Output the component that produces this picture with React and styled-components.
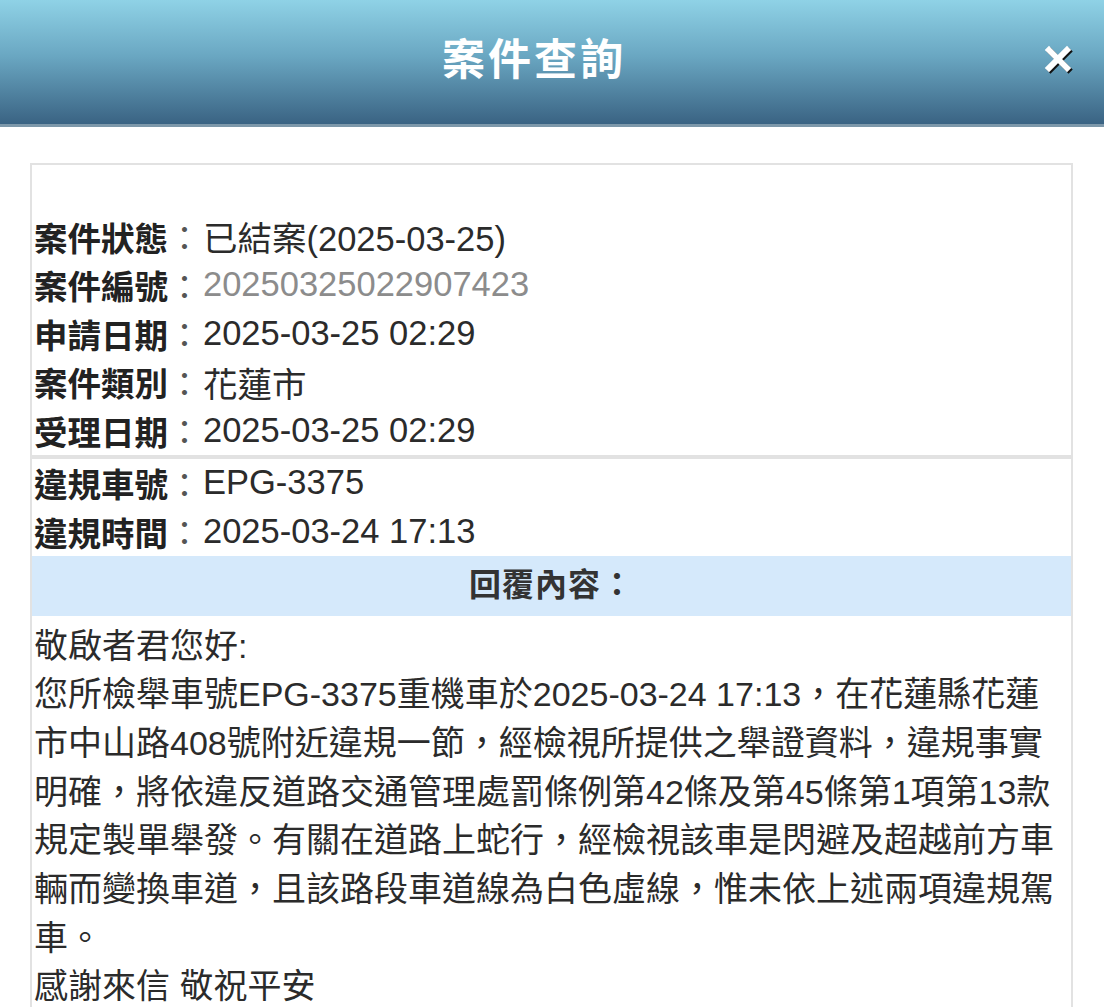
import React from 'react'
import styled, { createGlobalStyle } from 'styled-components'

const GlobalStyle = createGlobalStyle`
  body {
    margin: 0;
    background: #fff;
    font-family: 'Liberation Sans', 'Noto Sans CJK TC', sans-serif;
    color: #333;
  }
`

const info = [
  { label: '案件狀態', value: '已結案(2025-03-25)' },
  { label: '案件編號', value: '20250325022907423', muted: true },
  { label: '申請日期', value: '2025-03-25 02:29' },
  { label: '案件類別', value: '花蓮市' },
  { label: '受理日期', value: '2025-03-25 02:29' },
]

const violation = [
  { label: '違規車號', value: 'EPG-3375' },
  { label: '違規時間', value: '2025-03-24 17:13' },
]

const replyLines = [
  '您所檢舉車號EPG-3375重機車於2025-03-24 17:13，在花蓮縣花蓮',
  '市中山路408號附近違規一節，經檢視所提供之舉證資料，違規事實',
  '明確，將依違反道路交通管理處罰條例第42條及第45條第1項第13款',
  '規定製單舉發。有關在道路上蛇行，經檢視該車是閃避及超越前方車',
  '輛而變換車道，且該路段車道線為白色虛線，惟未依上述兩項違規駕',
  '車。',
]

const App = () => {
  return (
    <>
      <GlobalStyle />
      <Header>
        <Title>案件查詢</Title>
        <Close aria-label='close'>
          <svg width='30' height='30' viewBox='0 0 30 30'>
            <path d='M6 6 L24 24 M24 6 L6 24' stroke='#111' strokeWidth='6' strokeLinecap='square' transform='translate(1.5 1.5)' />
            <path d='M6 6 L24 24 M24 6 L6 24' stroke='#fff' strokeWidth='6' strokeLinecap='square' />
          </svg>
        </Close>
      </Header>
      <Main>
        <Card>
          <Section>
            <Spacer />
            {info.map((row) => (
              <Row key={row.label}>
                <Label>{row.label}</Label>
                <Colon>：</Colon>
                <Value $muted={row.muted}>{row.value}</Value>
              </Row>
            ))}
          </Section>
          <Section>
            {violation.map((row) => (
              <Row key={row.label}>
                <Label>{row.label}</Label>
                <Colon>：</Colon>
                <Value>{row.value}</Value>
              </Row>
            ))}
            <Band>回覆內容：</Band>
            <Reply>
              <p>敬啟者君您好:</p>
              <p>
                {replyLines.map((line, i) => (
                  <React.Fragment key={i}>
                    {line}
                    {i < replyLines.length - 1 && <br />}
                  </React.Fragment>
                ))}
              </p>
              <p>感謝來信 敬祝平安</p>
            </Reply>
          </Section>
        </Card>
      </Main>
    </>
  )
}

const Header = styled.header`
  position: relative;
  height: 127px;
  display: flex;
  align-items: center;
  justify-content: center;
  padding-right: 36px;
  box-sizing: border-box;
  background: linear-gradient(to bottom, #8fd2e6 0%, #6aa7c2 45%, #3a6383 100%);
  border-bottom: 3px solid #7d98aa;
`

const Title = styled.h1`
  margin: -13px 0 0;
  color: #fff;
  font-size: 43px;
  font-weight: 700;
  letter-spacing: 3px;
  font-family: 'Noto Sans CJK TC', sans-serif;
`

const Close = styled.button`
  position: absolute;
  right: 31px;
  top: 44px;
  padding: 0;
  border: 0;
  background: none;
  display: flex;
`

const Main = styled.main`
  padding: 36px 31px 0 30px;
`

const Card = styled.div`
  border: 2px solid #e2e2e2;
  border-bottom: 0;
`

const Section = styled.div`
  & + & {
    border-top: 4px solid #e2e2e2;
  }
`

const Spacer = styled.div`
  height: 47px;
`

const Row = styled.div`
  display: flex;
  align-items: center;
  height: 48.5px;
  padding-left: 2px;
  color: #333;
`

const Label = styled.span`
  font-family: 'Noto Sans CJK TC', sans-serif;
  font-weight: 700;
  font-size: 33.5px;
  color: #222;
`

const Colon = styled.span`
  font-family: 'Noto Sans CJK TC', sans-serif;
  width: 35px;
  font-size: 33px;
  color: #555;
`

const Value = styled.span`
  font-size: 34.5px;
  color: ${(p) => (p.$muted ? '#8c8c8c' : '#2b2b2b')};
`

const Band = styled.div`
  height: 60px;
  padding-bottom: 8px;
  box-sizing: border-box;
  display: flex;
  align-items: center;
  justify-content: center;
  background: #d5e9fb;
  font-family: 'Noto Sans CJK TC', sans-serif;
  font-weight: 700;
  font-size: 32px;
  color: #333;
  letter-spacing: 1px;
`

const Reply = styled.div`
  padding: 6px 0 0 2px;
  font-size: 34px;
  line-height: 48.7px;
  color: #2b2b2b;
  p {
    margin: 0;
  }
`

export default App
